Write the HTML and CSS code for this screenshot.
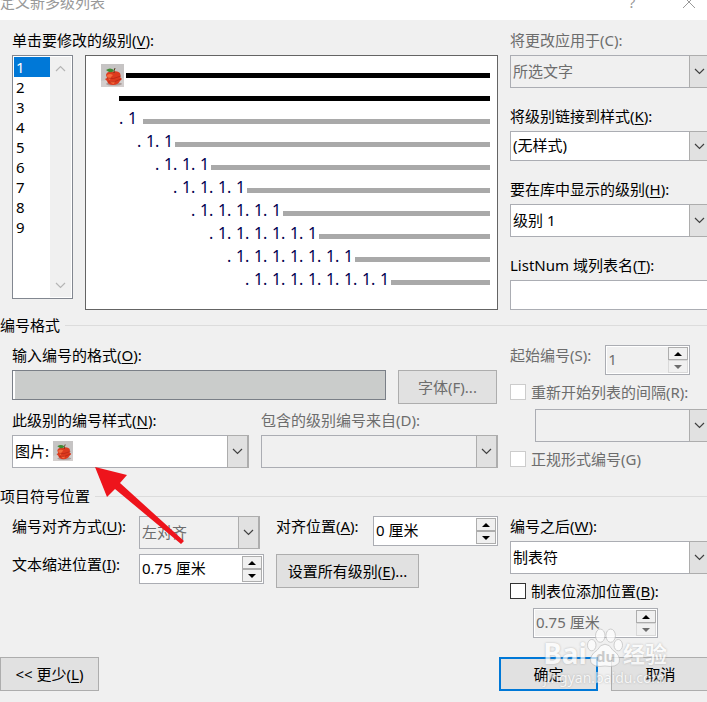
FILE: index.html
```html
<!DOCTYPE html>
<html lang="zh-CN">
<head>
  <meta charset="UTF-8">
  <title>定义新多级列表</title>
  <link rel="stylesheet" href="styles.css">
</head>
<body>

  <svg class="defs" width="0" height="0" aria-hidden="true">
    <symbol id="chevron" viewBox="0 0 11 7"><path d="M1 1l4.5 4.5L10 1" fill="none" stroke="currentColor" stroke-width="1.2"/></symbol>
    <symbol id="up" viewBox="0 0 8 4"><path d="M4 0l4 4H0z" fill="currentColor"/></symbol>
    <symbol id="down" viewBox="0 0 8 4"><path d="M0 0h8L4 4z" fill="currentColor"/></symbol>
    <symbol id="apple" viewBox="0 0 23 23">
      <rect width="23" height="23" fill="#c6c4c4"/>
      <path d="M0 17L23 14V23H0z" fill="#d3cecd"/>
      <ellipse cx="13" cy="20" rx="8" ry="1.6" fill="#a99c9a"/>
      <path d="M5 11Q6 7 11 8Q16 6 19 9Q20 11 19 13L21 15L19 17Q17 21 12 21Q7 21 6 17L4 15L6 14z" fill="#dc3a1e"/>
      <path d="M6 11Q9 9 12 11Q9 13 9 16Q6 15 6 11zM9 17Q12 18 14 17L13 20Q10 20 9 17z" fill="#f66a3c"/>
      <path d="M6 14Q12 16 20 12M7 18Q13 19 20 15" stroke="#b02414" stroke-width=".7" fill="none"/>
      <path d="M13 9Q13 6 14 4" stroke="#5a3b1c" stroke-width="1" fill="none"/>
      <path d="M5 6Q9 3 13 6Q12 9 8 8z" fill="#3f8a34"/>
    </symbol>
  </svg>

  <div class="dialog">
    <header class="titlebar">
      <span>定义新多级列表</span>
      <button class="title-btn" aria-label="帮助">?</button>
      <button class="title-btn" aria-label="关闭"><svg width="12" height="12" viewBox="0 0 12 12"><path d="M0 0l12 12M12 0L0 12" stroke="currentColor"/></svg></button>
    </header>

    <section class="columns levels">
      <div class="stack">
        <label for="level">单击要修改的级别(<u>V</u>):</label>
        <div class="level-row">
          <div class="listbox">
            <select id="level" size="9">
              <option selected>1</option>
              <option>2</option>
              <option>3</option>
              <option>4</option>
              <option>5</option>
              <option>6</option>
              <option>7</option>
              <option>8</option>
              <option>9</option>
            </select>
            <div class="scroll">
              <svg class="flip" width="11" height="7"><use href="#chevron"/></svg>
              <svg width="11" height="7"><use href="#chevron"/></svg>
            </div>
          </div>
          <div class="preview" id="preview">
            <div class="line dark"><svg width="23" height="23"><use href="#apple"/></svg><span class="bar"></span></div>
            <div class="line dark second"><span class="bar"></span></div>
          </div>
        </div>
      </div>

      <div class="fields">
        <div class="stack">
          <label class="off" for="apply">将更改应用于(C):</label>
          <div class="combo off"><select id="apply" disabled><option>所选文字</option></select><span class="drop"><svg width="11" height="7"><use href="#chevron"/></svg></span></div>
        </div>
        <div class="stack">
          <label for="link">将级别链接到样式(<u>K</u>):</label>
          <div class="combo short"><select id="link"><option>(无样式)</option></select><span class="drop"><svg width="11" height="7"><use href="#chevron"/></svg></span></div>
        </div>
        <div class="stack">
          <label for="gallery">要在库中显示的级别(<u>H</u>):</label>
          <div class="combo"><select id="gallery"><option>级别 1</option></select><span class="drop"><svg width="11" height="7"><use href="#chevron"/></svg></span></div>
        </div>
        <div class="stack">
          <label for="listnum">ListNum 域列表名(<u>T</u>):</label>
          <input class="text" id="listnum" type="text">
        </div>
      </div>
    </section>

    <h2 class="group">编号格式</h2>

    <section class="columns format">
      <div>
        <div class="stack">
          <label for="format">输入编号的格式(<u>O</u>):</label>
          <div class="format-row">
            <input class="text filled" id="format" type="text">
            <button class="btn" disabled>字体(F)...</button>
          </div>
        </div>
        <div class="halves">
          <div class="stack">
            <label for="style">此级别的编号样式(<u>N</u>):</label>
            <div class="combo"><select id="style"><option>图片:</option></select><svg class="pic" width="20" height="20"><use href="#apple"/></svg><span class="drop"><svg width="11" height="7"><use href="#chevron"/></svg></span></div>
          </div>
          <div class="stack">
            <label class="off" for="include">包含的级别编号来自(D):</label>
            <div class="combo off"><select id="include" disabled></select><span class="drop"><svg width="11" height="7"><use href="#chevron"/></svg></span></div>
          </div>
        </div>
      </div>

      <div class="options">
        <div class="start-row">
          <label class="off" for="start">起始编号(S):</label>
          <div class="spin small off">
            <input id="start" type="text" value="1" disabled>
            <span class="arrows"><button aria-label="增加"><svg width="8" height="4"><use href="#up"/></svg></button><button aria-label="减少" disabled><svg width="8" height="4"><use href="#down"/></svg></button></span>
          </div>
        </div>
        <label class="check off"><input type="checkbox" disabled><span>重新开始列表的间隔(R):</span></label>
        <div class="combo off indent"><select aria-label="重新开始列表的间隔" disabled></select><span class="drop"><svg width="11" height="7"><use href="#chevron"/></svg></span></div>
        <label class="check off"><input type="checkbox" disabled><span>正规形式编号(G)</span></label>
      </div>
    </section>

    <h2 class="group position">项目符号位置</h2>

    <section class="columns place">
      <div class="place-grid">
        <label for="align">编号对齐方式(<u>U</u>):</label>
        <div class="combo off align"><select id="align" disabled><option>左对齐</option></select><span class="drop"><svg width="11" height="7"><use href="#chevron"/></svg></span></div>
        <label class="inset" for="at">对齐位置(<u>A</u>):</label>
        <div class="spin">
          <input id="at" type="text" value="0 厘米">
          <span class="arrows"><button aria-label="增加"><svg width="8" height="4"><use href="#up"/></svg></button><button aria-label="减少"><svg width="8" height="4"><use href="#down"/></svg></button></span>
        </div>
        <label for="textindent">文本缩进位置(<u>I</u>):</label>
        <div class="spin">
          <input id="textindent" type="text" value="0.75 厘米">
          <span class="arrows"><button aria-label="增加"><svg width="8" height="4"><use href="#up"/></svg></button><button aria-label="减少"><svg width="8" height="4"><use href="#down"/></svg></button></span>
        </div>
        <button class="btn set-all">设置所有级别(<u>E</u>)...</button>
      </div>

      <div class="options">
        <div class="stack">
          <label for="follow">编号之后(<u>W</u>):</label>
          <div class="combo"><select id="follow"><option>制表符</option></select><span class="drop"><svg width="11" height="7"><use href="#chevron"/></svg></span></div>
        </div>
        <label class="check"><input type="checkbox"><span>制表位添加位置(<u>B</u>):</span></label>
        <div class="spin off tab">
          <input type="text" aria-label="制表位" value="0.75 厘米" disabled>
          <span class="arrows"><button aria-label="增加"><svg width="8" height="4"><use href="#up"/></svg></button><button aria-label="减少" disabled><svg width="8" height="4"><use href="#down"/></svg></button></span>
        </div>
      </div>
    </section>

    <footer class="buttons">
      <button class="btn">&lt;&lt; 更少(<u>L</u>)</button>
      <button class="btn ok">确定</button>
      <button class="btn">取消</button>
    </footer>

    <svg class="pointer" width="90" height="78" viewBox="0 0 90 78" aria-hidden="true"><path d="M0 0L32 8L25 16L89 74L86 77L20 22L12 30z" fill="#ee141c"/></svg>

    <div class="watermark">
      <div class="brand">
        <span class="bai">Bai</span>
        <span class="paw">
          <svg width="36" height="40" viewBox="0 0 38 42"><g fill="#fff" stroke="#bbb" stroke-width="1"><ellipse cx="14" cy="8" rx="5" ry="7"/><ellipse cx="25" cy="8" rx="5" ry="7"/><ellipse cx="5" cy="18" rx="4.500" ry="6"/><ellipse cx="33" cy="18" rx="4.500" ry="6"/><path d="M19 17Q24 17 27 23Q36 29 34 36Q31 42 19 40Q7 42 4 36Q2 29 11 23Q14 17 19 17z"/></g></svg>
          <span class="du">du</span>
        </span>
        <span class="jy">经验</span>
      </div>
      <div class="site">jingyan.baidu.com</div>
    </div>
  </div>

  <script>
    const preview = document.getElementById("preview");

    // levels 2-9, each one step further in
    for (let n = 1; n <= 8; n++) {
      const line = document.createElement("div");
      line.className = "line";
      line.style.marginLeft = `${n * 18}px`;
      line.innerHTML = `<span class="num">${"<i>.</i><b>1</b>".repeat(n)}</span><span class="bar"></span>`;
      preview.appendChild(line);
    }
  </script>

</body>
</html>
```

FILE: styles.css
```css
* {
  box-sizing: border-box;
}

body {
  margin: 0;
  background: #f0f0f0;
  color: #000;
  font-family: "Noto Sans", "Noto Sans CJK SC", sans-serif;
  font-size: 15px;
  line-height: 20px;
  overflow: hidden;
}

.defs {
  position: absolute;
}

/* the right edge of the dialog runs just past the window */
.dialog {
  display: flow-root;
  position: relative;
  margin-right: -4px;
}

button, input, select {
  font: inherit;
  color: inherit;
  margin: 0;
}

u {
  text-underline-offset: 2px;
}

svg {
  display: block;
}

.off {
  color: #6d6d6d;
}

/* Title bar */
.titlebar {
  display: flex;
  align-items: center;
  height: 36px;
  margin-top: -16px;
  padding-right: 16px;
  background: #fff;
  color: #999;
}

.titlebar span {
  flex: 1;
}

.title-btn {
  display: flex;
  justify-content: center;
  width: 12px;
  margin-left: 45px;
  padding: 0;
  border: none;
  background: none;
}

/* Layout */
.columns {
  display: grid;
  grid-template-columns: minmax(0, 486fr) minmax(0, 201fr);
  gap: 12px;
  padding-left: 12px;
}

.stack {
  display: flex;
  flex-direction: column;
  gap: 5px;
}

.stack label, .place-grid label, .start-row label {
  height: 20px;
  white-space: nowrap;
}

.levels {
  padding-top: 10px;
}

.fields {
  display: flex;
  flex-direction: column;
  gap: 18px;
}

.group {
  display: flex;
  align-items: center;
  gap: 5px;
  margin: 5px 0 10px;
  font-size: 15px;
  font-weight: normal;
}

.group::after {
  content: "";
  flex: 1;
  height: 1px;
  background: #dcdcdc;
}

.group.position {
  margin-top: 17px;
}

/* Level list and preview */
.level-row {
  display: flex;
  align-items: flex-start;
  gap: 12px;
}

.listbox {
  display: flex;
  width: 61px;
  height: 244px;
  padding: 1px;
  border: 1px solid #828790;
  background: #fff;
}

.listbox select {
  appearance: none;
  flex: 1;
  min-width: 0;
  padding: 0;
  border: none;
  border-radius: 0;
  outline: none;
  background: #fff;
  overflow: hidden;
}

.listbox option {
  height: 20px;
  min-height: 20px;
  padding: 0 2px;
  border-radius: 0;
  line-height: 20px;
}

.listbox option:checked {
  background: linear-gradient(#0078d7, #0078d7);
  color: #fff;
  -webkit-text-fill-color: #fff;
}

.scroll {
  display: flex;
  flex-direction: column;
  justify-content: space-between;
  align-items: center;
  width: 21px;
  padding: 8px 0;
  background: #f0f0f0;
  color: #b5b5b5;
}

.flip {
  transform: rotate(180deg);
}

.preview {
  flex: 1;
  height: 255px;
  padding: 8px 7px 0 15px;
  border: 1px solid #646464;
  background: #fff;
}

.line {
  display: flex;
  align-items: center;
  gap: 2px;
  height: 23px;
}

.second {
  margin-left: 18px;
}

.num {
  display: flex;
  align-self: flex-start;
  min-width: 22px;
  font-size: 16px;
  line-height: 17px;
  color: #000050;
}

.num i, .num b {
  width: 9px;
  font-style: normal;
  font-weight: normal;
}

.bar {
  flex: 1;
  height: 5px;
  background: #a9a9a9;
}

.dark .bar {
  background: #000;
}

/* Drop-downs */
.combo {
  position: relative;
  height: 33px;
}

.combo.short {
  height: 30px;
}

.combo select {
  appearance: none;
  width: 100%;
  height: 100%;
  padding: 0 24px 2px 2px;
  border: 1px solid #abadb3;
  border-radius: 0;
  background: #fff;
}

.combo.off select {
  background: #f0f0f0;
  opacity: 1;
}

.drop {
  position: absolute;
  top: 0;
  right: 0;
  bottom: 0;
  display: flex;
  align-items: center;
  justify-content: center;
  width: 22px;
  border: 1px solid #adadad;
  border-right-width: 2px;
  background: #e1e1e1;
  color: #404040;
  pointer-events: none;
}

.pic {
  position: absolute;
  top: 6px;
  left: 41px;
  pointer-events: none;
}

/* Text boxes */
.text {
  width: 100%;
  height: 30px;
  padding: 0 3px;
  border: 1px solid #abadb3;
  background: #fff;
}

.text.filled {
  flex: 1;
  min-width: 0;
  border-color: #7a7f87;
  background: #cacccb;
  box-shadow: inset 2px 0 #fff;
}

.spin {
  display: flex;
  width: 125px;
  height: 30px;
  padding: 1px;
  border: 1px solid #abadb3;
  background: #fff;
}

.spin.small {
  width: 85px;
}

.spin input {
  flex: 1;
  min-width: 0;
  padding: 0 1px 2px;
  border: none;
  background: transparent;
}

.spin.off input {
  background: #f0f0f0;
}

.arrows {
  display: flex;
  flex-direction: column;
  width: 20px;
  color: #000;
}

.arrows button {
  display: flex;
  flex: 1;
  align-items: center;
  justify-content: center;
  padding: 0;
  border: 1px solid #adadad;
  background: #f0f0f0;
}

.arrows button:disabled {
  border-color: #d9d9d9;
  color: #6d6d6d;
}

/* Buttons */
.btn {
  width: 99px;
  height: 34px;
  padding: 0;
  border: 1px solid #adadad;
  background: #e1e1e1;
}

.btn:disabled {
  color: #6d6d6d;
}

/* Number format */
.format-row {
  display: flex;
  gap: 12px;
}

.format-row .btn {
  margin-right: 1px;
}

.halves {
  display: grid;
  grid-template-columns: 1fr 1fr;
  gap: 12px;
  margin-top: 6px;
}

.options {
  display: flex;
  flex-direction: column;
  gap: 7px;
}

.start-row {
  display: flex;
  gap: 14px;
}

.check {
  display: flex;
  align-items: center;
  gap: 5px;
  white-space: nowrap;
}

.check input {
  appearance: none;
  width: 16px;
  height: 16px;
  border: 1px solid #333;
  background: #fff;
}

.check.off input {
  border-color: #ccc;
}

.indent {
  margin-left: 25px;
}

.tab {
  margin-left: 23px;
}

/* Position */
.place-grid {
  display: grid;
  grid-template-columns: 127px 125px 109px 125px;
  row-gap: 5px;
  align-items: start;
  align-content: start;
}

.inset {
  padding-left: 12px;
}

.align {
  margin-right: 4px;
}

.set-all {
  grid-column: span 2;
  width: 143px;
  margin-left: 12px;
}

/* Bottom buttons */
.buttons {
  display: flex;
  gap: 13px;
  padding: 19px 1px 11px 0;
}

.ok {
  margin-left: auto;
  border: 2px solid #0078d7;
}

/* Pointer over the style box */
.pointer {
  position: absolute;
  top: 467px;
  left: 95px;
  pointer-events: none;
}

.watermark {
  position: absolute;
  right: 44px;
  bottom: 14px;
  color: #fff;
  opacity: 0.7;
  text-shadow: 0 0 2px #999;
  pointer-events: none;
}

.brand {
  display: flex;
  align-items: flex-end;
}

.bai {
  font-size: 28px;
  font-weight: bold;
  line-height: 30px;
}

.paw {
  position: relative;
}

.du {
  position: absolute;
  left: 9px;
  bottom: 2px;
  color: #bbb;
  font-weight: bold;
  text-shadow: none;
}

.jy {
  font-size: 22px;
  font-weight: bold;
  line-height: 30px;
}

.site {
  font-size: 14px;
  line-height: 20px;
}
```
